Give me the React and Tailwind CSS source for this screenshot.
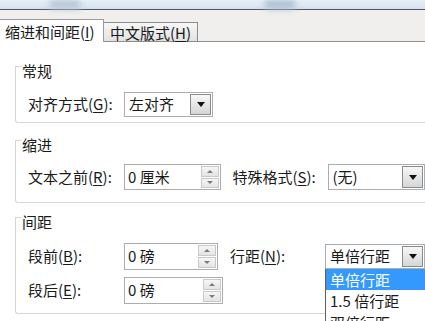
import React from 'react';

const Caret = () => (
  <svg width="8" height="5" viewBox="0 0 8 5">
    <polygon points="0,0 8,0 4,5" fill="#111" />
  </svg>
);

function Mn({ children }) {
  return <span className="underline underline-offset-2 decoration-1">{children}</span>;
}

function Select({ value, width }) {
  return (
    <div className={`flex items-center h-full ${width} border border-[#abadb3] bg-white`}>
      <span className="pl-[4px] flex-1 whitespace-nowrap">{value}</span>
      <div className="w-[21px] h-[calc(100%-2px)] mr-px border border-[#8b8b8b] bg-gradient-to-b from-[#f7f7f7] to-[#d6d6d6] flex items-center justify-center shrink-0">
        <Caret />
      </div>
    </div>
  );
}

function Spin({ value }) {
  return (
    <div className="flex items-center h-full w-[99px] border border-[#abadb3] bg-white">
      <span className="pl-[3px] flex-1 whitespace-nowrap">{value}</span>
      <div className="flex flex-col w-[18px] h-[calc(100%-2px)] mr-px gap-px shrink-0">
        {['up', 'down'].map((d) => (
          <div key={d} className="flex-1 border border-[#c9c9c9] bg-gradient-to-b from-[#f6f6f6] to-[#e4e4e4] flex items-center justify-center">
            <svg width="6" height="3" viewBox="0 0 6 3">
              <polygon points={d === 'up' ? '0,3 6,3 3,0' : '0,0 6,0 3,3'} fill="#7b7b7b" />
            </svg>
          </div>
        ))}
      </div>
    </div>
  );
}

function Group({ label, className, children }) {
  return (
    <div className={`border-l border-b border-[#d6d6d6] rounded-bl-[3px] ${className}`}>
      <div className="flex items-start h-[14px]">
        <span className="w-[6px] -ml-px border-t border-[#d6d6d6] rounded-tl-[3px]" />
        <span className="-mt-[4px] leading-[18px] pl-px">{label}</span>
      </div>
      {children}
    </div>
  );
}

export default function App() {
  return (
    <div className="w-[425px] h-[321px] overflow-hidden bg-white text-[15px] text-[#1a1a1a] font-['Noto_Sans_CJK_SC','Noto_Sans',sans-serif]">
      {/* window edge */}
      <div className="h-[9px] bg-gradient-to-b from-[#e8f0f8] to-[#d2e1f0] flex">
        <div className="ml-[50px] w-[30px] h-full bg-[#b5c6d6] blur-[3px]" />
        <div className="ml-[185px] w-[30px] h-full bg-[#aebfd0] blur-[3px]" />
      </div>
      <div className="h-px bg-[#4f5a66]" />

      {/* tabs */}
      <div className="h-[32px] bg-[#f0efed] border-b border-[#8c8c8c] flex items-end">
        <div className="w-[104px] h-[23px] -mb-px bg-white border-t border-r border-[#9a9a9a] flex items-center pl-[5px] leading-none whitespace-nowrap">
          缩进和间距(<Mn>I</Mn>)
        </div>
        <div className="w-[94px] h-[19px] border-t border-r border-[#8c8c8c] bg-gradient-to-b from-[#f7f7f7] to-[#e2e2e2] flex items-center pl-[6px] leading-none whitespace-nowrap">
          中文版式(<Mn>H</Mn>)
        </div>
      </div>

      <div className="pl-[15px]">
        <Group label="常规" className="mt-[24px] pb-[5px]">
          <div className="flex items-center h-[25px] mt-[12px] pl-[12px]">
            <span className="w-[96px] shrink-0 whitespace-nowrap">对齐方式(<Mn>G</Mn>):</span>
            <Select value="左对齐" width="w-[89px]" />
          </div>
        </Group>

        <Group label="缩进" className="mt-[17px] pb-[12px]">
          <div className="flex items-center h-[26px] mt-[10px] pl-[12px]">
            <span className="w-[96px] shrink-0 whitespace-nowrap">文本之前(<Mn>R</Mn>):</span>
            <Spin value="0 厘米" />
            <span className="w-[95px] ml-[12px] shrink-0 whitespace-nowrap">特殊格式(<Mn>S</Mn>):</span>
            <Select value="(无)" width="w-[100px]" />
          </div>
        </Group>

        <Group label="间距" className="mt-[14px] pb-[9px]">
          <div className="flex items-center h-[27px] mt-[12px] pl-[12px]">
            <span className="w-[96px] shrink-0 whitespace-nowrap">段前(<Mn>B</Mn>):</span>
            <Spin value="0 磅" />
            <span className="w-[95px] ml-[12px] shrink-0 whitespace-nowrap">行距(<Mn>N</Mn>):</span>
            <div className="relative h-[25px]">
              <Select value="单倍行距" width="w-[100px]" />
              <div className="absolute left-0 top-full w-[100px] bg-white border-l border-[#5f5f5f] z-10">
                <div className="h-[21px] bg-[#3399ff] text-white pl-[4px] leading-[21px] whitespace-nowrap">单倍行距</div>
                <div className="h-[22px] pl-[4px] leading-[22px] whitespace-nowrap">1.5 倍行距</div>
                <div className="h-[22px] pl-[4px] leading-[22px] whitespace-nowrap">双倍行距</div>
              </div>
            </div>
          </div>
          <div className="flex items-center h-[27px] mt-[7px] pl-[12px]">
            <span className="w-[96px] shrink-0 whitespace-nowrap">段后(<Mn>E</Mn>):</span>
            <Spin value="0 磅" />
          </div>
        </Group>
      </div>
    </div>
  );
}
